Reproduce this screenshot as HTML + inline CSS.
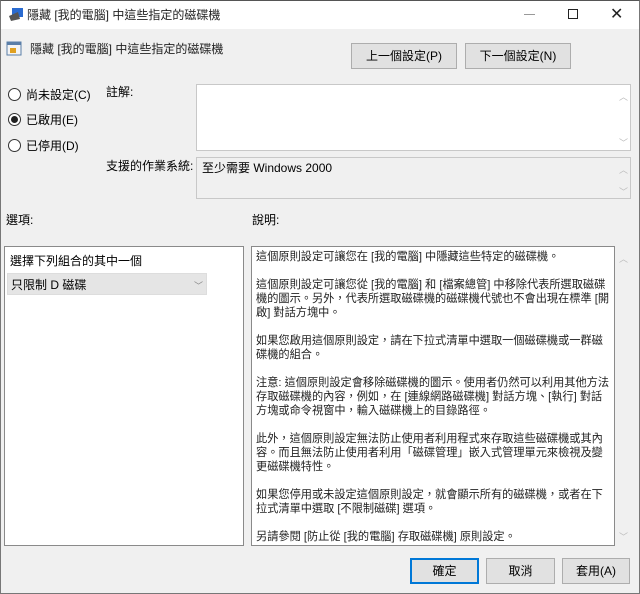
<!DOCTYPE html>
<html><head><meta charset="utf-8"><style>
*{margin:0;padding:0;box-sizing:border-box}
body{width:640px;height:594px;overflow:hidden;background:#f0f0f0;font-family:"Liberation Sans","Noto Sans CJK TC",sans-serif;font-size:12px;color:#000;position:relative}
.a{position:absolute;white-space:nowrap}
.btn{position:absolute;background:#e1e1e1;border:1px solid #adadad;text-align:center;font-size:12px}
.rad{position:absolute;width:13px;height:13px;border:1px solid #333;border-radius:50%;background:#fff}
.arr{position:absolute;color:#bbb;font-size:9px}
</style></head><body>
<div class="a" style="left:0;top:0;width:640px;height:29px;background:#fff"></div>
<div class="a" style="left:0;top:0;width:640px;height:594px;border:1px solid #777;border-top-color:#555"></div>
<svg class="a" style="left:8px;top:6px" width="16" height="16"><rect x="4" y="2" width="11" height="9" fill="#2a6bd0"/><path d="M1 10 L10 6 L12 13 L3 15Z" fill="#555"/></svg>
<div class="a" style="left:27px;top:6px;font-size:12px;color:#222">隱藏 [我的電腦] 中這些指定的磁碟機</div>
<div class="a" style="left:524px;top:14px;width:11px;height:1px;background:#999"></div>
<div class="a" style="left:568px;top:9px;width:10px;height:10px;border:1px solid #222"></div>
<div class="a" style="left:610px;top:4px;font-size:16px;color:#222">✕</div>
<svg class="a" style="left:6px;top:40px" width="16" height="16"><rect x="1" y="2" width="14" height="13" fill="#f4f4f4" stroke="#5a7ea8"/><rect x="1" y="2" width="14" height="3" fill="#5a7ea8"/><rect x="4" y="8" width="6" height="5" fill="#e0a020"/></svg>
<div class="a" style="left:30px;top:40px;color:#222">隱藏 [我的電腦] 中這些指定的磁碟機</div>
<div class="btn" style="left:351px;top:43px;width:106px;height:26px;line-height:24px">上一個設定(P)</div>
<div class="btn" style="left:465px;top:43px;width:106px;height:26px;line-height:24px">下一個設定(N)</div>
<div class="rad" style="left:8px;top:88px"></div><div class="a" style="left:26px;top:86px">尚未設定(C)</div>
<div class="rad" style="left:8px;top:113px"></div><div class="a" style="left:11px;top:116px;width:7px;height:7px;border-radius:50%;background:#222"></div><div class="a" style="left:26px;top:111px">已啟用(E)</div>
<div class="rad" style="left:8px;top:139px"></div><div class="a" style="left:26px;top:137px">已停用(D)</div>
<div class="a" style="left:106px;top:83px">註解:</div>
<div class="a" style="left:196px;top:84px;width:435px;height:67px;background:#fff;border:1px solid #c8c8c8"></div>
<div class="arr" style="left:619px;top:90px">︿</div><div class="arr" style="left:619px;top:136px">﹀</div>
<div class="a" style="left:106px;top:157px">支援的作業系統:</div>
<div class="a" style="left:196px;top:157px;width:435px;height:42px;background:#f0f0f0;border:1px solid #c8c8c8"></div>
<div class="a" style="left:202px;top:159px">至少需要 Windows 2000</div>
<div class="arr" style="left:619px;top:163px">︿</div><div class="arr" style="left:619px;top:185px">﹀</div>
<div class="a" style="left:6px;top:211px">選項:</div>
<div class="a" style="left:252px;top:211px">說明:</div>
<div class="a" style="left:4px;top:246px;width:240px;height:300px;background:#fff;border:1px solid #8a8a8a"></div>
<div class="a" style="left:10px;top:252px">選擇下列組合的其中一個</div>
<div class="a" style="left:7px;top:273px;width:200px;height:22px;background:#e5e5e5;border:1px solid #ddd"></div>
<div class="a" style="left:11px;top:276px">只限制 D 磁碟</div>
<div class="arr" style="left:194px;top:279px;color:#888">﹀</div>
<div class="a" style="left:251px;top:246px;width:364px;height:300px;background:#fff;border:1px solid #8a8a8a"></div>
<div class="arr" style="left:619px;top:252px">︿</div><div class="arr" style="left:619px;top:530px">﹀</div>
<div class="a" style="left:256px;top:250px;line-height:14px;font-size:11.2px;color:#222">這個原則設定可讓您在 [我的電腦] 中隱藏這些特定的磁碟機。<br><br>這個原則設定可讓您從 [我的電腦] 和 [檔案總管] 中移除代表所選取磁碟<br>機的圖示。另外，代表所選取磁碟機的磁碟機代號也不會出現在標準 [開<br>啟] 對話方塊中。<br><br>如果您啟用這個原則設定，請在下拉式清單中選取一個磁碟機或一群磁<br>碟機的組合。<br><br>注意: 這個原則設定會移除磁碟機的圖示。使用者仍然可以利用其他方法<br>存取磁碟機的內容，例如，在 [連線網路磁碟機] 對話方塊、[執行] 對話<br>方塊或命令視窗中，輸入磁碟機上的目錄路徑。<br><br>此外，這個原則設定無法防止使用者利用程式來存取這些磁碟機或其內<br>容。而且無法防止使用者利用「磁碟管理」嵌入式管理單元來檢視及變<br>更磁碟機特性。<br><br>如果您停用或未設定這個原則設定，就會顯示所有的磁碟機，或者在下<br>拉式清單中選取 [不限制磁碟] 選項。<br><br>另請參閱 [防止從 [我的電腦] 存取磁碟機] 原則設定。</div>
<div class="btn" style="left:410px;top:558px;width:69px;height:26px;line-height:22px;border:2px solid #0078d7">確定</div>
<div class="btn" style="left:486px;top:558px;width:69px;height:26px;line-height:24px">取消</div>
<div class="btn" style="left:562px;top:558px;width:68px;height:26px;line-height:24px">套用(A)</div>
</body></html>
